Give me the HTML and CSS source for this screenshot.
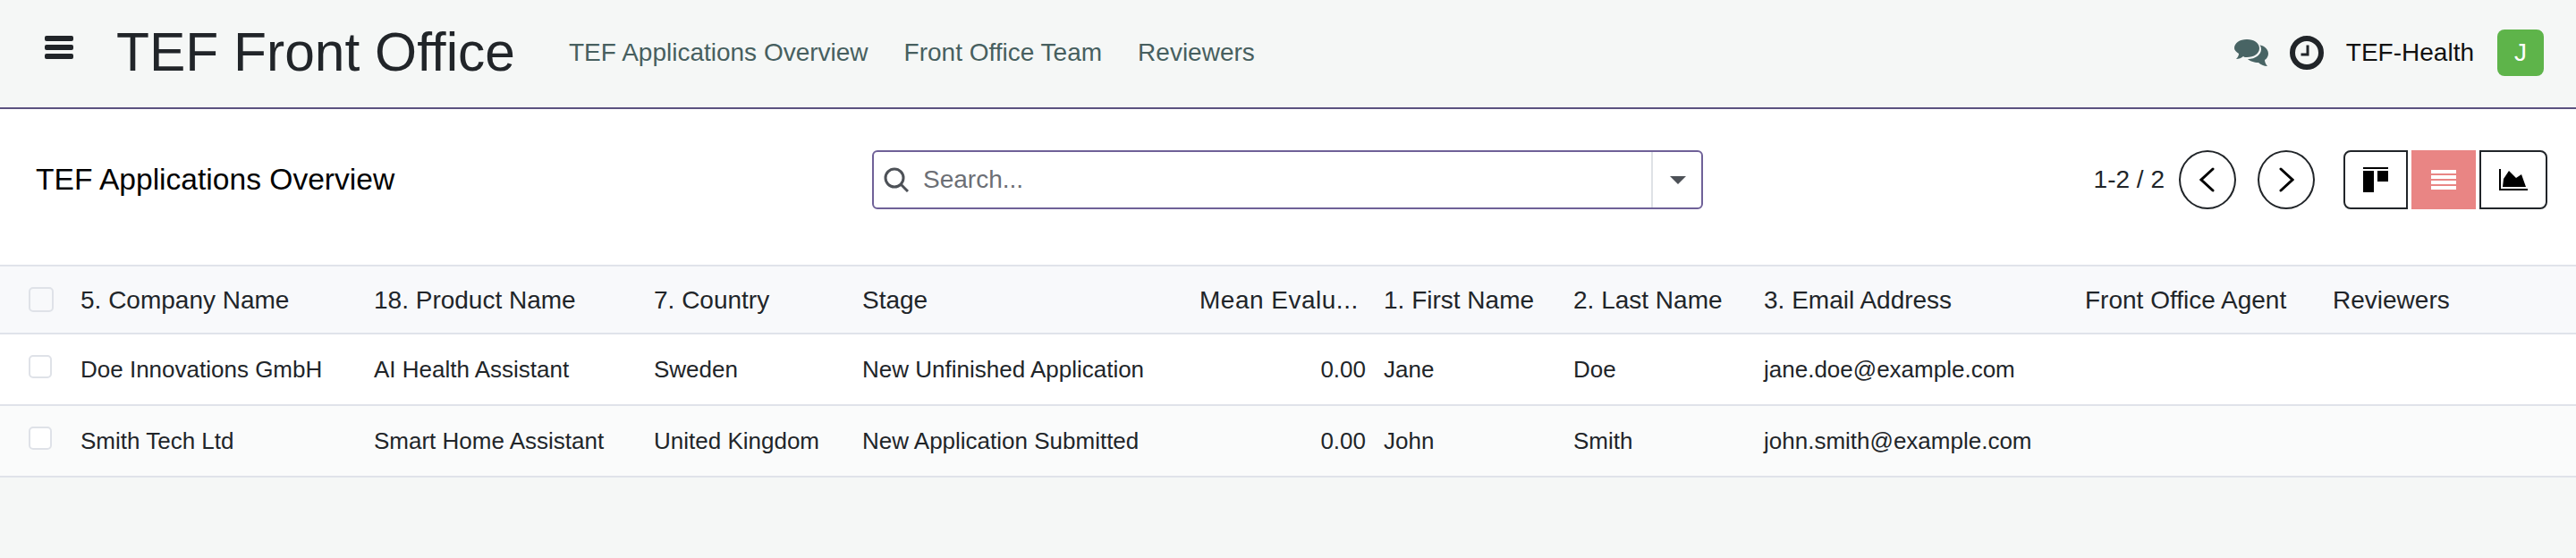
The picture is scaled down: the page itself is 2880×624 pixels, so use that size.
FILE: index.html
```html
<!DOCTYPE html>
<html lang="en">
<head>
  <meta charset="UTF-8">
  <title>TEF Front Office</title>
  <link rel="stylesheet" href="styles.css">
</head>
<body>
  <header class="navbar">
    <button class="menu-toggle" aria-label="Menu">
      <span></span><span></span><span></span>
    </button>
    <div class="brand">TEF Front Office</div>
    <nav class="nav-links">
      <a>TEF Applications Overview</a>
      <a>Front Office Team</a>
      <a>Reviewers</a>
    </nav>
    <div class="systray">
      <svg class="icon-chat" viewBox="0 0 38 30" width="38" height="30">
        <path class="bubble-back" d="M25 6c7 0 13 4 13 10 0 3-2 6-4 7 0 2 1 5 3 7-4 0-8-2-10-4-5 0-10-2-12-4 6-1 14-6 10-16z"/>
        <path class="bubble-gap" d="M15 0c9 0 15 5 15 11s-6 11-15 11c-2 0-3 0-4-1-2 2-5 3-9 3 2-2 3-4 3-6-3-2-5-4-5-7C0 5 6 0 15 0z"/>
        <path class="bubble-front" d="M14 0c8 0 14 4 14 10s-6 10-14 10c-2 0-3 0-4-1-2 2-5 3-8 3 2-2 3-4 3-6-3-2-5-4-5-6C0 4 6 0 14 0z"/>
      </svg>
      <svg class="icon-clock" viewBox="0 0 38 38" width="38" height="38">
        <circle cx="19" cy="19" r="16"/>
        <path d="M20 10.500v10.500h-7.500"/>
      </svg>
      <span class="company">TEF-Health</span>
      <span class="avatar">J</span>
    </div>
  </header>

  <section class="control-panel">
    <h2 class="page-title">TEF Applications Overview</h2>
    <div class="search-box">
      <svg class="icon-search" viewBox="0 0 28 28" width="28" height="28">
        <circle cx="12" cy="12" r="10"/>
        <path d="M19 19l8 8"/>
      </svg>
      <span class="search-text">Search...</span>
      <span class="search-toggle"><i class="caret"></i></span>
    </div>
    <div class="panel-right">
      <span class="pager-value">1-2 / 2</span>
      <button class="pager-btn" aria-label="Previous">
        <svg viewBox="0 0 18 30" width="18" height="30"><path d="M15 3L2 15l13 12"/></svg>
      </button>
      <button class="pager-btn" aria-label="Next">
        <svg viewBox="0 0 18 30" width="18" height="30"><path d="M3 3l13 12L3 27"/></svg>
      </button>
      <div class="view-switch">
        <button class="view-btn" aria-label="Kanban">
          <svg viewBox="0 0 28 28" width="28" height="28"><path d="M0 0h28v2H0zM0 4h12v24H0zM16 4h12v12H16z"/></svg>
        </button>
        <button class="view-btn active" aria-label="List">
          <svg viewBox="0 0 28 22" width="28" height="22"><path d="M0 0h28v4H0zM0 6h28v4H0zM0 12h28v4H0zM0 18h28v4H0z"/></svg>
        </button>
        <button class="view-btn" aria-label="Graph">
          <svg viewBox="0 0 32 24" width="32" height="24"><path d="M0 0h2v22h30v2H0z"/><path d="M4 20l1-9 6-9 8 8 6-4 5 14z"/></svg>
        </button>
      </div>
    </div>
  </section>

  <table class="list-table">
    <thead>
      <tr>
        <th class="col-check"><i class="check head-check"></i></th>
        <th class="col-company">5. Company Name</th>
        <th class="col-product">18. Product Name</th>
        <th class="col-country">7. Country</th>
        <th class="col-stage">Stage</th>
        <th class="col-mean">Mean Evalu...</th>
        <th class="col-first">1. First Name</th>
        <th class="col-last">2. Last Name</th>
        <th class="col-email">3. Email Address</th>
        <th class="col-agent">Front Office Agent</th>
        <th class="col-reviewers">Reviewers</th>
      </tr>
    </thead>
    <tbody>
      <tr>
        <td class="cell-check"><i class="check"></i></td>
        <td>Doe Innovations GmbH</td>
        <td>AI Health Assistant</td>
        <td>Sweden</td>
        <td>New Unfinished Application</td>
        <td class="num">0.00</td>
        <td>Jane</td>
        <td>Doe</td>
        <td>jane.doe@example.com</td>
        <td></td>
        <td></td>
      </tr>
      <tr>
        <td class="cell-check"><i class="check"></i></td>
        <td>Smith Tech Ltd</td>
        <td>Smart Home Assistant</td>
        <td>United Kingdom</td>
        <td>New Application Submitted</td>
        <td class="num">0.00</td>
        <td>John</td>
        <td>Smith</td>
        <td>john.smith@example.com</td>
        <td></td>
        <td></td>
      </tr>
    </tbody>
  </table>
</body>
</html>
```
FILE: styles.css
```css
* {
  box-sizing: border-box;
}
html, body {
  height: 100%;
}
body {
  margin: 0;
  background: #f5f7f6;
  color: #212529;
  font-family: "Liberation Sans", Arial, sans-serif;
  font-size: 26px;
  overflow: hidden;
}
button {
  padding: 0;
  background: none;
  border: none;
  font: inherit;
}

/* top bar */
.navbar {
  display: flex;
  align-items: center;
  height: 122px;
  padding: 0 36px 2px 50px;
  background: #f5f7f6;
  border-bottom: 2px solid #5b5280;
}
.menu-toggle {
  display: flex;
  flex-direction: column;
  gap: 4px;
  width: 32px;
  margin-top: -12px;
  margin-right: 48px;
}
.menu-toggle span {
  height: 6px;
  background: #212529;
  border-radius: 2px;
}
.brand {
  font-size: 60.500px;
  margin-right: 60px;
  margin-top: -2px;
}
.nav-links {
  display: flex;
  gap: 40px;
  font-size: 28px;
  color: #475f5f;
}
.systray {
  display: flex;
  align-items: center;
  margin-left: auto;
}
.icon-chat {
  margin-right: 24px;
}
.bubble-back, .bubble-front {
  fill: #486464;
}
.bubble-gap {
  fill: #f5f7f6;
}
.icon-clock {
  fill: none;
  stroke: #212529;
  margin-right: 25px;
}
.icon-clock circle {
  stroke-width: 6px;
}
.icon-clock path {
  stroke-width: 3px;
}
.company {
  font-size: 28px;
  color: #111;
  margin-right: 26px;
}
.avatar {
  display: flex;
  align-items: center;
  justify-content: center;
  width: 52px;
  height: 52px;
  border-radius: 8px;
  background: #5eb44a;
  color: #fff;
  font-size: 28px;
}

/* title, search and pager */
.control-panel {
  display: flex;
  align-items: center;
  height: 174px;
  padding: 0 32px 16px 40px;
  background: #fff;
}
.page-title {
  margin: 0;
  width: 935px;
  font-size: 33.600px;
  font-weight: normal;
  color: #000;
}
.search-box {
  display: flex;
  align-items: center;
  width: 929px;
  height: 66px;
  padding-left: 11px;
  border: 2px solid #6f6198;
  border-radius: 6px;
}
.icon-search {
  fill: none;
  stroke: #4d5157;
  stroke-width: 3px;
}
.search-text {
  margin-left: 16px;
  color: #6c6f75;
  font-size: 28px;
}
.search-toggle {
  display: flex;
  align-items: center;
  align-self: stretch;
  margin-left: auto;
  width: 56px;
  padding-left: 19px;
  border-left: 2px solid #dee2e6;
}
.caret {
  width: 0;
  height: 0;
  border-left: 9px solid transparent;
  border-right: 9px solid transparent;
  border-top: 9px solid #4d5157;
}
.panel-right {
  display: flex;
  align-items: center;
  margin-left: auto;
}
.pager-value {
  font-size: 28px;
  margin-right: 16px;
}
.pager-btn {
  display: flex;
  align-items: center;
  justify-content: center;
  width: 64px;
  height: 66px;
  margin-right: 24px;
  border: 2px solid #212529;
  border-radius: 50%;
}
.pager-btn svg {
  fill: none;
  stroke: #000;
  stroke-width: 3px;
  stroke-linecap: round;
}
.view-switch {
  display: flex;
  gap: 4px;
  margin-left: 8px;
}
.view-btn {
  display: flex;
  align-items: center;
  justify-content: center;
  width: 72px;
  height: 66px;
  border: 2px solid #212529;
}
.view-btn:first-child {
  border-radius: 8px 0 0 8px;
}
.view-btn:last-child {
  width: 76px;
  border-radius: 0 8px 8px 0;
}
.view-btn.active {
  background: #e98584;
  border-color: #e98584;
  fill: #fff;
}

/* list */
.list-table {
  width: 100%;
  table-layout: fixed;
  border-collapse: collapse;
  background: #fff;
}
.list-table th, .list-table td {
  padding: 0 10px;
  white-space: nowrap;
  text-align: left;
  font-weight: normal;
}
.list-table th {
  padding-top: 2px;
}
.list-table th.col-check {
  padding-top: 0;
}
.list-table thead tr {
  height: 76px;
  background: #f8f9fb;
  border-top: 2px solid #e0e3ea;
  border-bottom: 2px solid #e0e3ea;
  font-size: 28px;
}
.list-table tbody tr {
  height: 80px;
  border-bottom: 2px solid #e0e3ea;
}
.list-table tbody tr:nth-child(even) {
  background: #fafbfb;
}
.col-check { width: 80px; }
.col-company { width: 328px; }
.col-product { width: 313px; }
.col-country { width: 233px; }
.col-stage { width: 383px; }
.col-mean { width: 200px; }
.col-first { width: 212px; }
.col-last { width: 213px; }
.col-email { width: 359px; }
.col-agent { width: 277px; }
.col-reviewers { width: 282px; }
.list-table th.col-mean {
  padding: 2px 20px 0 4px;
  text-align: right;
  letter-spacing: 0.500px;
}
.list-table td.num {
  text-align: right;
}
.check {
  display: block;
  width: 26px;
  height: 26px;
  margin: -6px 0 0 22px;
  background: #fff;
  border: 2px solid #dfe2e8;
  border-radius: 5px;
}
.head-check {
  width: 28px;
  height: 28px;
  margin-top: 0;
  background: transparent;
}
```
